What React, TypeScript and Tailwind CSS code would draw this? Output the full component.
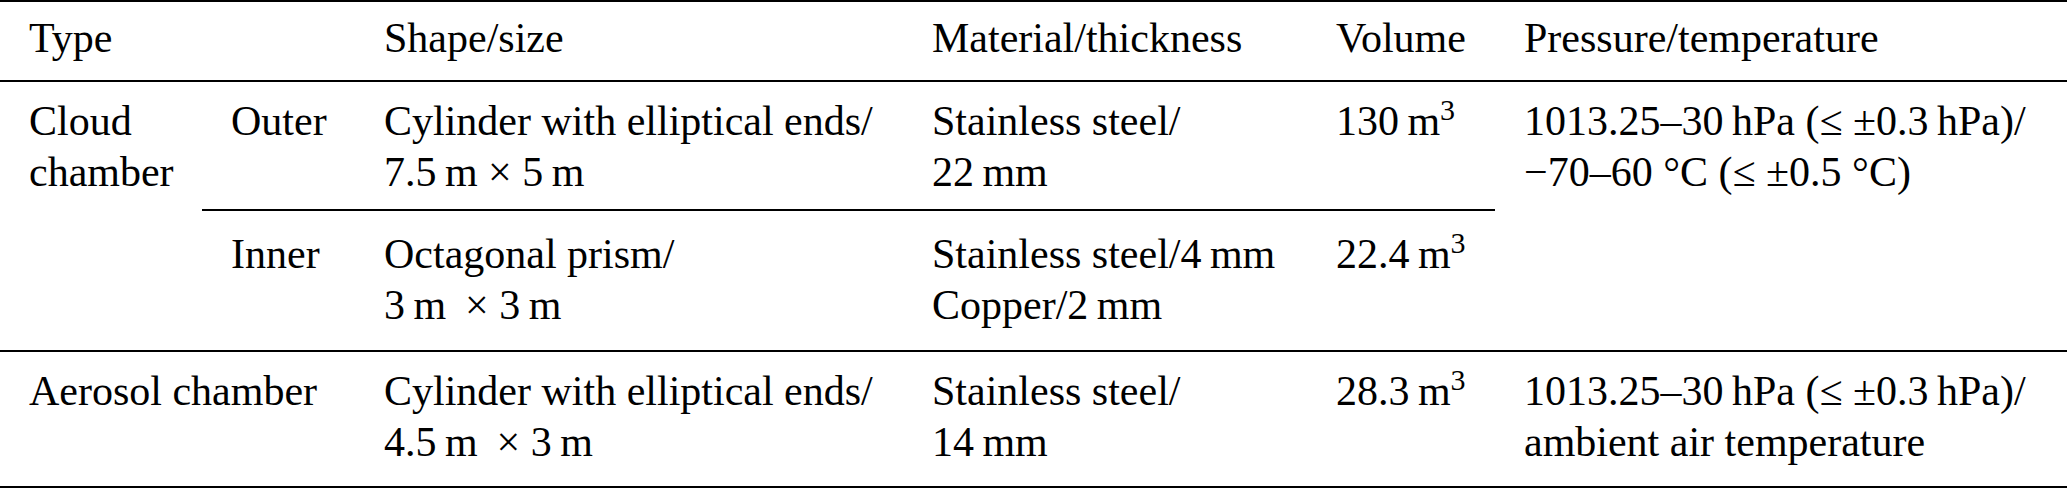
import { FC, ReactNode } from "react";

const M3: FC = () => (
  <>
    {"\u2009m"}
    <sup className="text-[30px] -top-[15px]">3</sup>
  </>
);

const Cell: FC<{ className?: string; children?: ReactNode }> = ({ className = "", children }) => (
  <div className={`pl-[29px] whitespace-nowrap ${className}`}>{children}</div>
);

const Rule: FC<{ className: string }> = ({ className }) => <div className={`bg-black ${className}`} />;

const App: FC = () => {
  return (
    <div className="w-[2067px] h-[488px] bg-white text-black font-['Liberation_Serif','Times_New_Roman',serif] text-[42px] leading-[51px]">
      <div className="grid grid-cols-[202px_153px_548px_404px_188px_572px] grid-rows-[2px_78px_2px_127px_2px_139px_2px_134px_2px]">
        {/* top rule */}
        <Rule className="col-start-1 col-span-6 row-start-1" />

        {/* header */}
        <Cell className="col-start-1 col-span-2 row-start-2 pt-[11px]">Type</Cell>
        <Cell className="col-start-3 row-start-2 pt-[11px]">Shape/size</Cell>
        <Cell className="col-start-4 row-start-2 pt-[11px]">Material/thickness</Cell>
        <Cell className="col-start-5 row-start-2 pt-[11px]">Volume</Cell>
        <Cell className="col-start-6 row-start-2 pt-[11px]">Pressure/temperature</Cell>

        <Rule className="col-start-1 col-span-6 row-start-3" />

        {/* cloud chamber */}
        <Cell className="col-start-1 row-start-4 row-span-3 pt-[14px]">
          Cloud
          <br />
          chamber
        </Cell>
        <Cell className="col-start-2 row-start-4 pt-[14px]">Outer</Cell>
        <Cell className="col-start-3 row-start-4 pt-[14px]">
          Cylinder with elliptical ends/
          <br />
          7.5{"\u2009"}m × 5{"\u2009"}m
        </Cell>
        <Cell className="col-start-4 row-start-4 pt-[14px]">
          Stainless steel/
          <br />
          22{"\u2009"}mm
        </Cell>
        <Cell className="col-start-5 row-start-4 pt-[14px]">
          130
          <M3 />
        </Cell>
        <Cell className="col-start-6 row-start-4 row-span-3 pt-[14px]">
          1013.25–30{"\u2009"}hPa (≤ ±0.3{"\u2009"}hPa)/
          <br />
          −70–60 °C (≤ ±0.5 °C)
        </Cell>

        <Rule className="col-start-2 col-span-4 row-start-5 h-[1.5px] self-center" />

        <Cell className="col-start-2 row-start-6 pt-[18px]">Inner</Cell>
        <Cell className="col-start-3 row-start-6 pt-[18px]">
          Octagonal prism/
          <br />
          3{"\u2009"}m {"\u2009"}× 3{"\u2009"}m
        </Cell>
        <Cell className="col-start-4 row-start-6 pt-[18px]">
          Stainless steel/4{"\u2009"}mm
          <br />
          Copper/2{"\u2009"}mm
        </Cell>
        <Cell className="col-start-5 row-start-6 pt-[18px]">
          22.4
          <M3 />
        </Cell>

        <Rule className="col-start-1 col-span-6 row-start-7" />

        {/* aerosol chamber */}
        <Cell className="col-start-1 col-span-2 row-start-8 pt-[14px]">Aerosol chamber</Cell>
        <Cell className="col-start-3 row-start-8 pt-[14px]">
          Cylinder with elliptical ends/
          <br />
          4.5{"\u2009"}m {"\u2009"}× 3{"\u2009"}m
        </Cell>
        <Cell className="col-start-4 row-start-8 pt-[14px]">
          Stainless steel/
          <br />
          14{"\u2009"}mm
        </Cell>
        <Cell className="col-start-5 row-start-8 pt-[14px]">
          28.3
          <M3 />
        </Cell>
        <Cell className="col-start-6 row-start-8 pt-[14px]">
          1013.25–30{"\u2009"}hPa (≤ ±0.3{"\u2009"}hPa)/
          <br />
          ambient air temperature
        </Cell>

        <Rule className="col-start-1 col-span-6 row-start-9" />
      </div>
    </div>
  );
};

export default App;
